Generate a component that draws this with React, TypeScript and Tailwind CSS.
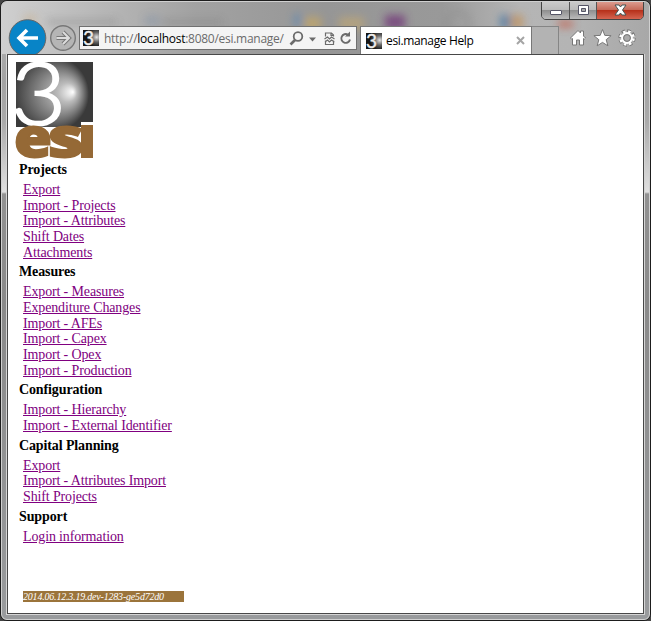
import React from "react";

const sections = [
  { title: "Projects", links: ["Export", "Import - Projects", "Import - Attributes", "Shift Dates", "Attachments"] },
  { title: "Measures", links: ["Export - Measures", "Expenditure Changes", "Import - AFEs", "Import - Capex", "Import - Opex", "Import - Production"] },
  { title: "Configuration", links: ["Import - Hierarchy", "Import - External Identifier"] },
  { title: "Capital Planning", links: ["Export", "Import - Attributes Import", "Shift Projects"] },
  { title: "Support", links: ["Login information"] },
];

function Favicon() {
  return (
    <svg width="16" height="16" viewBox="0 0 16 16" className="shrink-0 overflow-visible">
      <defs>
        <radialGradient id="fav" cx="0.85" cy="0.45" r="0.6">
          <stop offset="0" stopColor="#e5e5e5" />
          <stop offset="0.5" stopColor="#666" />
          <stop offset="1" stopColor="#161616" />
        </radialGradient>
      </defs>
      <rect width="16" height="16" fill="url(#fav)" />
      <text x="0" y="15" fontSize="19" fill="#eee" stroke="#eee" strokeWidth=".4" className="font-['Lato',sans-serif]">3</text>
    </svg>
  );
}

function Logo() {
  return (
    <svg width="78" height="96" viewBox="0 0 78 96" className="ml-[7px] mt-[7px] block shrink-0 overflow-visible">
      <defs>
        <radialGradient id="ball" gradientUnits="userSpaceOnUse" cx="36" cy="32" r="38" fx="58" fy="30">
          <stop offset="0" stopColor="#fff" />
          <stop offset="0.25" stopColor="#bbb" />
          <stop offset="0.65" stopColor="#777" />
          <stop offset="1" stopColor="#3a3a3a" />
        </radialGradient>
      </defs>
      <rect x="1" y="0" width="77" height="65" fill="#3a3a3a" />
      <svg x="1" y="0" width="77" height="65" viewBox="1 0 77 65">
        <circle cx="37" cy="32" r="38" fill="url(#ball)" />
      </svg>
      <text x="-4" y="63" fontSize="86" fontWeight="300" fill="#fff" stroke="#fff" strokeWidth="2.2" textLength="55" lengthAdjust="spacingAndGlyphs" className="font-['Lato',sans-serif]">3</text>
      <rect x="66" y="60" width="12" height="3" fill="#fff" />
      <g fill="#956936" stroke="#956936" strokeWidth="1.8" fontWeight="800" fontSize="54" className="font-['Open_Sans',sans-serif]">
        <text x="-1" y="95" textLength="38" lengthAdjust="spacingAndGlyphs">e</text>
        <text x="33" y="95" textLength="36" lengthAdjust="spacingAndGlyphs">s</text>
      </g>
      <rect x="66" y="63" width="12" height="33" fill="#956936" />
    </svg>
  );
}

function GlassReflections() {
  return (
    <svg width="649" height="53" viewBox="0 0 649 53" className="absolute left-0 top-0">
      <defs>
        <filter id="soft" x="-50%" y="-50%" width="200%" height="200%"><feGaussianBlur stdDeviation="4" /></filter>
      </defs>
      <g filter="url(#soft)" opacity=".85">
        <rect x="22" y="13" width="12" height="8" fill="#c9ab84" opacity=".6" />
        <path d="M45 20h70M160 20h60" stroke="#777" strokeWidth="5" opacity=".5" />
        <rect x="143" y="14" width="14" height="9" fill="#778ca5" opacity=".5" />
        <rect x="292" y="12" width="8" height="13" fill="#5d88b4" opacity=".8" />
        <rect x="302" y="15" width="17" height="13" fill="#c0a56b" />
        <rect x="337" y="15" width="25" height="13" fill="#b8a47c" />
        <rect x="383" y="13" width="20" height="14" fill="#76407c" />
        <circle cx="456" cy="21" r="11" fill="none" stroke="#858585" strokeWidth="2" />
        <rect x="498" y="13" width="10" height="14" fill="#537da3" />
        <rect x="509" y="13" width="12" height="14" fill="#c09464" />
        <rect x="556" y="19" width="15" height="6" fill="#c45b48" />
      </g>
    </svg>
  );
}

function Chrome() {
  return (
    <header className="relative flex h-[52px] shrink-0 overflow-hidden rounded-t-[5px] bg-[linear-gradient(90deg,#cfcfcf_0%,#b8b8b8_15%,#a2a2a2_30%,#969696_50%,#999_68%,#b5b5b5_80%,#b4b4b4_88%,#a8a8a8_100%)] pl-[5px]">
      <GlassReflections />
      <div className="relative flex">
        <svg width="70" height="53" viewBox="0 2 70 53" className="shrink-0">
          <circle cx="20.5" cy="38" r="18.3" fill="#0884c7" stroke="#666" strokeWidth="1" />
          <path d="M31 38H13M20 30l-8 8 8 8" fill="none" stroke="#fff" strokeWidth="3.6" />
          <circle cx="56" cy="38" r="12.3" fill="#b5b5b5" stroke="#777" strokeWidth="1.4" />
          <path d="M49.500 38H61M56 32l6 6-6 6" fill="none" stroke="#777" strokeWidth="4" />
          <path d="M49.500 38H61M56 32l6 6-6 6" fill="none" stroke="#ddd" strokeWidth="2" />
        </svg>
        <div className="ml-[2px] mt-[24px] flex h-[24px] w-[278px] items-center border border-[#707070] bg-[#f4f4f4] pl-[3px]">
          <Favicon />
          <span className="ml-[5px] w-[186px] whitespace-nowrap pt-[2px] font-['Open_Sans',sans-serif] text-[12px] tracking-[-0.27px] text-[#6b6b6b]">
            http://<span className="text-black">localhost</span>:8080/esi.manage/
          </span>
          <svg width="62" height="22" viewBox="0 0 62 22" fill="none" stroke="#6b6b6b" className="shrink-0 overflow-visible">
            <circle cx="8" cy="9.500" r="4.300" strokeWidth="1.800" />
            <path d="M5 13L.5 17.500" strokeWidth="2.600" />
            <path d="M19 10.500h7l-3.500 4z" fill="#6b6b6b" stroke="none" />
            <path d="M35.500 9.500V6h6l2 2v1.500M35.500 13.500v4h8v-4M41 5.500v3h3M34.500 12l3-2 2 2 2-2 3 2M35 15l2.500-2 2 2 2-2 3 2" strokeWidth="1.200" />
            <path d="M58 7.700A4.400 4.400 0 1 0 60 12.500" strokeWidth="1.900" />
            <path d="M55 9.500h5v-5z" fill="#6b6b6b" stroke="none" />
          </svg>
        </div>
        <div className="ml-[3px] mt-[24px] flex h-[28px] w-[172px] items-center border border-b-0 border-[#777] bg-white pl-[5px]">
          <Favicon />
          <span className="ml-[4px] w-[130px] whitespace-nowrap pt-px font-['Open_Sans',sans-serif] text-[12px] tracking-[-0.35px] text-black">esi.manage Help</span>
          <svg width="9" height="9" viewBox="0 0 9 9" stroke="#a5a5a5" strokeWidth="2" className="shrink-0"><path d="M1 1l7 7M8 1L1 8" /></svg>
        </div>
        <div className="mt-[24px] h-[28px] w-[27px] border border-b-0 border-l-0 border-[#858585] bg-[#b3b3b3]" />
        <svg width="66" height="18" viewBox="0 0 66 18" fill="#fff" stroke="#777" strokeWidth="1" className="ml-[11px] mt-[27px] overflow-visible">
          <path d="M.5 9L8 1.500 10.500 4V2h3v5l2 2-1.200 1.200-.8-.7V16h-4v-5h-3v5h-4V9.500l-.8.7z" />
          <path d="M32.500 .5l2.300 5.900 6.300.3-4.900 4 1.700 6.100-5.400-3.400-5.300 3.400 1.600-6.100-4.900-4 6.300-.3z" />
          <circle cx="57" cy="9" r="6.700" stroke="#777" strokeWidth="4" strokeDasharray="3.300 1.960" fill="none" />
          <circle cx="57" cy="9" r="6.500" stroke="#fff" strokeWidth="2.600" strokeDasharray="2.400 2.705" strokeDashoffset="-.4" fill="none" />
          <circle cx="57" cy="9" r="4.800" stroke="#fff" strokeWidth="2.200" fill="none" />
          <circle cx="57" cy="9" r="3.400" fill="#aaa" stroke="#777" />
        </svg>
      </div>
      <div className="absolute right-[5px] top-[-2px] flex h-[20px] w-[103px] overflow-hidden rounded-b-[5px] border border-[#444] bg-[#aaa]">
        <div className="flex w-[28px] items-end justify-center border-r border-[#555] bg-[linear-gradient(#ccc_0%,#bbb_48%,#8d8d8d_50%,#bbb_100%)] pb-[4px]"><span className="h-[5px] w-[12px] rounded-[1px] border border-[#556] bg-white" /></div>
        <div className="flex w-[27px] items-center justify-center border-r border-[#555] bg-[linear-gradient(#ccc_0%,#bbb_48%,#8d8d8d_50%,#bbb_100%)]">
          <svg width="13" height="10" viewBox="0 0 13 10"><path d="M1.500.5h10v9h-10z" fill="#fff" stroke="#556" /><path d="M4.500 3.500h4v3h-4z" fill="#aaa" stroke="#556" /></svg>
        </div>
        <div className="flex flex-1 items-center justify-center bg-[linear-gradient(#dfa195_0%,#c66b5a_48%,#b52e18_50%,#d46450_100%)]">
          <svg width="13" height="12" viewBox="0 0 13 12"><path d="M1 1h4l1.500 2L8 1h4L8.500 6l3.500 5H8L6.500 9 5 11H1l3.500-5z" fill="#fff" stroke="#455" /></svg>
        </div>
      </div>
    </header>
  );
}

export default function App() {
  return (
    <div className="h-[621px] w-[651px] bg-[#444]">
      <div className="flex h-full w-full flex-col overflow-hidden rounded-[7px] border border-[#1d1d1d] bg-[#a9a9a9]">
        <div className="flex flex-1 flex-col rounded-[6px] border border-[#d0d0d0] bg-[linear-gradient(#b5b5b5_0px,#a3a3a3_80px,#aaa_120px,#e0e0e0_190px,#929292_192px,#8a8a8a_300px,#999b9d_100%)]">
          <Chrome />
          <main className="mx-[5px] mb-[5px] flex flex-1 flex-col border border-[#484848] bg-white font-['Liberation_Serif',serif] text-black outline outline-1 outline-[#d5d5d5]">
            <Logo />
            <nav>
              {sections.map((section) => (
                <section key={section.title} className="pl-[11px]">
                  <h2 className="h-[24.100px] text-[14px] font-bold leading-[24.700px] tracking-[-0.12px]">{section.title}</h2>
                  <ul className="pl-[4px]">
                    {section.links.map((link) => (
                      <li key={link} className="h-[15.650px] text-[14px] leading-[15.500px] tracking-[-0.14px]">
                        <a className="text-[#800080] underline" href="#">{link}</a>
                      </li>
                    ))}
                  </ul>
                </section>
              ))}
            </nav>
            <footer className="ml-[15px] mt-[47px] h-[11px] w-[161px] whitespace-nowrap bg-[#9b743b] text-[10px] italic leading-[11px] tracking-[-0.2px] text-white">2014.06.12.3.19.dev-1283-ge5d72d0</footer>
          </main>
        </div>
      </div>
    </div>
  );
}
